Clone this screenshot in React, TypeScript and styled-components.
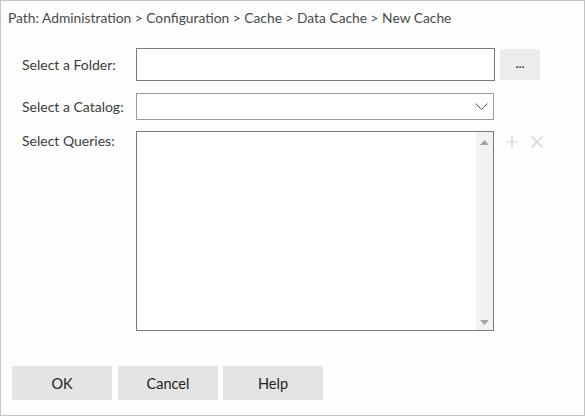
import React from "react";
import styled, { createGlobalStyle } from "styled-components";

const Global = createGlobalStyle`
  html, body { margin: 0; padding: 0; background: #ffffff; }
  body { font-family: Lato, "Open Sans", sans-serif; }
`;

const Frame = styled.div`
  box-sizing: border-box;
  width: 585px;
  height: 416px;
  border: 1px solid #c4c4c4;
  background: #fdfdfd;
  display: flex;
  flex-direction: column;
`;

const PathBar = styled.div`
  padding: 9px 0 0 7px;
  height: 16px;
  line-height: 16px;
  font-size: 13.8px;
  color: #4a4a4a;
  white-space: nowrap;
`;

const Form = styled.div`
  display: flex;
  flex-direction: column;
  padding: 22px 0 0 21px;
`;

const Row = styled.div<{ $h: number; $top?: boolean; $mt?: number }>`
  display: flex;
  align-items: ${(p) => (p.$top ? "flex-start" : "center")};
  height: ${(p) => p.$h}px;
  margin-top: ${(p) => p.$mt ?? 0}px;
`;

const Label = styled.div<{ $pad?: number }>`
  width: 114px;
  flex: none;
  font-size: 14px;
  color: #3c3c3c;
  padding-top: ${(p) => p.$pad ?? 0}px;
`;

const TextBox = styled.div`
  box-sizing: border-box;
  width: 359px;
  height: 33px;
  border: 1px solid #7a7a7a;
  background: #ffffff;
`;

const BrowseButton = styled.div`
  width: 40px;
  height: 31px;
  margin-left: 5px;
  background: #ececec;
  display: flex;
  align-items: center;
  justify-content: center;
  font-size: 13px;
  color: #222;
  padding-bottom: 4px;
  box-sizing: border-box;
`;

const Select = styled.div`
  box-sizing: border-box;
  width: 358px;
  height: 27px;
  border: 1px solid #9a9a9a;
  background: #ffffff;
  display: flex;
  align-items: center;
  justify-content: flex-end;
  padding-right: 5px;
`;

const ListBox = styled.div`
  box-sizing: border-box;
  width: 358px;
  height: 200px;
  border: 1px solid #7a7a7a;
  background: #ffffff;
  display: flex;
  justify-content: flex-end;
`;

const ScrollTrack = styled.div`
  width: 17px;
  height: 100%;
  background: #f3f1f5;
  display: flex;
  flex-direction: column;
  justify-content: space-between;
  align-items: center;
  padding: 8px 0 5px;
  box-sizing: border-box;
`;

const Tools = styled.div`
  display: flex;
  gap: 13px;
  margin-left: 12px;
  padding-top: 5px;
`;

const Buttons = styled.div`
  display: flex;
  padding: 35px 0 0 11px;
`;

const Button = styled.div<{ $gap: number }>`
  width: 100px;
  height: 34px;
  margin-left: ${(p) => p.$gap}px;
  background: #e4e4e3;
  display: flex;
  align-items: center;
  justify-content: center;
  font-size: 14.5px;
  color: #222;
`;

const Chevron = () => (
  <svg width="13" height="8" viewBox="0 0 13 8">
    <path d="M0.5 0.5 L6.5 6.5 L12.5 0.5" fill="none" stroke="#555" strokeWidth="1" />
  </svg>
);

const Arrow = ({ up }: { up?: boolean }) => (
  <svg width="9" height="5" viewBox="0 0 9 5">
    <path d={up ? "M0 5 L4.5 0 L9 5 Z" : "M0 0 L9 0 L4.5 5 Z"} fill="#a3a3a3" />
  </svg>
);

const PlusIcon = () => (
  <svg width="12" height="12" viewBox="0 0 12 12">
    <path d="M6 0 V12 M0 6 H12" stroke="#cfcfcf" strokeWidth="1.2" />
  </svg>
);

const CloseIcon = () => (
  <svg width="12" height="12" viewBox="0 0 12 12">
    <path d="M0.5 0.5 L11.5 11.5 M11.5 0.5 L0.5 11.5" stroke="#cfcfcf" strokeWidth="1.2" />
  </svg>
);

export default function App() {
  return (
    <>
      <Global />
      <Frame>
        <PathBar>Path: Administration &gt; Configuration &gt; Cache &gt; Data Cache &gt; New Cache</PathBar>
        <Form>
          <Row $h={33}>
            <Label>Select a Folder:</Label>
            <TextBox />
            <BrowseButton>...</BrowseButton>
          </Row>
          <Row $h={27} $mt={12}>
            <Label>Select a Catalog:</Label>
            <Select>
              <Chevron />
            </Select>
          </Row>
          <Row $h={200} $top $mt={11}>
            <Label $pad={1}>Select Queries:</Label>
            <ListBox>
              <ScrollTrack>
                <Arrow up />
                <Arrow />
              </ScrollTrack>
            </ListBox>
            <Tools>
              <PlusIcon />
              <CloseIcon />
            </Tools>
          </Row>
        </Form>
        <Buttons>
          <Button $gap={0}>OK</Button>
          <Button $gap={6}>Cancel</Button>
          <Button $gap={5}>Help</Button>
        </Buttons>
      </Frame>
    </>
  );
}
